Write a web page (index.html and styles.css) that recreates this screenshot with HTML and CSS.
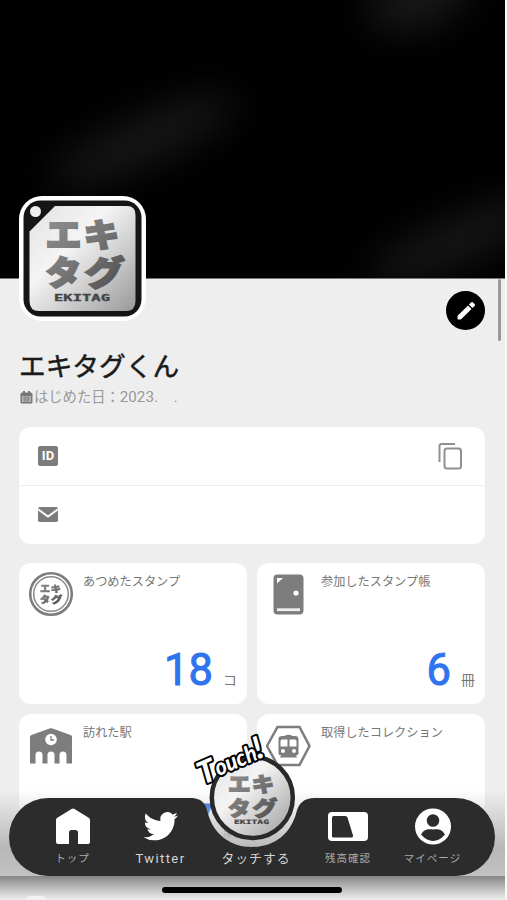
FILE: index.html
```html
<!DOCTYPE html>
<html lang="ja">
<head>
<meta charset="utf-8">
<title>マイページ</title>
<link rel="stylesheet" href="styles.css">
</head>
<body>
<svg class="defs" aria-hidden="true">
  <defs>
    <linearGradient id="plate" x1="0" y1="0" x2="1" y2="1">
      <stop offset="0" stop-color="#e2e2e2"/><stop offset=".38" stop-color="#f4f4f4"/><stop offset=".62" stop-color="#d2d2d2"/><stop offset="1" stop-color="#999"/>
    </linearGradient>
    <linearGradient id="ink" gradientUnits="userSpaceOnUse" x1="0" y1="0" x2="78" y2="72">
      <stop offset="0" stop-color="#8e8e8e"/><stop offset=".5" stop-color="#747474"/><stop offset="1" stop-color="#4c4c4c"/>
    </linearGradient>
    <symbol id="mark" viewBox="0 0 78 72" overflow="visible">
      <g class="mark-kana">
        <text x="-2" y="30" textLength="36" lengthAdjust="spacingAndGlyphs">エ</text>
        <text x="36" y="30" textLength="36" lengthAdjust="spacingAndGlyphs">キ</text>
        <text x="-2" y="68" textLength="36" lengthAdjust="spacingAndGlyphs">タ</text>
        <text x="37" y="68" textLength="40" lengthAdjust="spacingAndGlyphs">グ</text>
      </g>
    </symbol>
  </defs>
</svg>
<div class="screen">
  <div class="cover"><i class="glow g1"></i><i class="glow g2"></i><i class="glow g3"></i></div>
  <main class="content">
    <div class="top">
      <svg class="avatar" width="128" height="126" viewBox="0 0 128 126">
        <rect x="0" y="1" width="127" height="125" rx="23" fill="#fff"/>
        <rect x="4.500" y="5.500" width="118" height="116" rx="17" fill="#151515"/>
        <path d="M36 11H108Q116.500 11 116.500 20V106Q116.500 116 107 116H20Q10.500 116 10.500 106V36.500Z" fill="url(#plate)"/>
        <circle cx="16.500" cy="16.500" r="5.500" fill="#eee"/>
        <use href="#mark" x="28.500" y="22" width="78" height="72"/>
        <text class="ekitag" x="35" y="105.500" textLength="56" lengthAdjust="spacingAndGlyphs">EKITAG</text>
      </svg>
      <button class="edit" aria-label="編集"><svg width="24" height="24" viewBox="0 0 24 24" fill="#fff"><path d="M3.500 17.500q0-.5.400-.9L14 6.500l3.500 3.500L7.400 20.100q-.4.400-.9.400H4.500q-1 0-1-1zM20.600 6.900c.5-.5.500-1.300 0-1.800l-1.700-1.700c-.5-.5-1.300-.5-1.800 0l-2.200 2.200 3.500 3.500z"/></svg></button>
    </div>
    <h1>エキタグくん</h1>
    <p class="since"><svg width="13" height="13" viewBox="0 0 13 13"><path d="M2 1.500h1V0h2v1.500h3V0h2v1.500h1q1.500 0 1.500 1.500v8q0 1.500-1.500 1.500H2Q.5 12.500.5 11V3Q.5 1.500 2 1.500z" fill="#777"/><path d="M2 5h9v6H2z" fill="#b5b5b5"/><path d="M3 7h7M3 9h7M5 5v6M8 5v6" stroke="#777" stroke-width=".7"/></svg><span>はじめた日：</span><span class="date">2023.</span><span>.</span></p>
    <section class="contact">
      <div class="line">
        <span class="id">ID</span>
        <svg width="26" height="30" viewBox="0 0 26 30" fill="none" stroke="#909090" stroke-width="2"><path d="M2.500 21V5q0-2 2-2H18"/><rect x="7.500" y="7.500" width="16.500" height="20" rx="2.500"/></svg>
      </div>
      <div class="line">
        <svg width="20" height="15" viewBox="0 0 20 15"><rect width="20" height="15" rx="1.800" fill="#7c7c7c"/><path d="M0 2.200 10 9.500 20 2.200" fill="none" stroke="#fff" stroke-width="2"/></svg>
      </div>
    </section>
    <section class="stats">
      <article>
        <header><svg width="46" height="46" viewBox="0 0 46 46"><circle cx="23" cy="23" r="20.800" fill="none" stroke="#7d7d7d" stroke-width="2.600"/><circle cx="23" cy="23" r="17.300" fill="none" stroke="#8a8a8a" stroke-width="1.500"/><use class="flat" href="#mark" x="12.500" y="13" width="22" height="20.300"/></svg><h2>あつめたスタンプ</h2></header>
        <p class="count"><b>18</b><span>コ</span></p>
      </article>
      <article>
        <header><svg width="46" height="46" viewBox="0 0 46 46"><rect x="7.500" y="3.500" width="30" height="40" rx="4" fill="#7d7d7d"/><path d="M11 7h6l-6 5.500z" fill="#fff"/><circle cx="30" cy="22" r="2.600" fill="#fff"/><path d="M11 38.700h23" stroke="#eee" stroke-width="2.800"/></svg><h2>参加したスタンプ帳</h2></header>
        <p class="count"><b>6</b><span>冊</span></p>
      </article>
      <article>
        <header><svg width="46" height="46" viewBox="0 0 46 46"><path d="M2 41.500V15q0-1.500 1.500-2L21.500 6.500q1.500-.6 3 0L42.500 13q1.500.5 1.500 2v26.500h-5.500V33a3.500 3.500 0 0 0-7 0v8.500h-5V33a3.500 3.500 0 0 0-7 0v8.500h-5V33a3.500 3.500 0 0 0-7 0v8.500z" fill="#7d7d7d"/><circle cx="23" cy="17.500" r="5.800" fill="#fff"/><path d="M23 14v4h3" fill="none" stroke="#7d7d7d" stroke-width="1.300"/></svg><h2>訪れた駅</h2></header>
        <p class="count"><b>7</b><span>駅</span></p>
      </article>
      <article>
        <header><svg width="46" height="46" viewBox="0 0 46 46"><path d="M11.500 5h22L43.500 24 33.500 43h-22L1 24z" fill="#fff" stroke="#7d7d7d" stroke-width="2.500"/><g transform="translate(0 1)"><path d="M18.500 13q4-2.500 8 0h2.500q3.500 0 3.500 3v14q0 2.500-3 2.500l2 2H13.500l2-2q-3 0-3-2.500V16q0-3 3.500-3z" fill="#7d7d7d"/><path d="M16 16.500h5.500v7H14.500V18q0-1.500 1.500-1.500zM23.500 16.500H29q1.500 0 1.500 1.500v5.500h-7z" fill="#fff"/><circle cx="17" cy="28" r="2" fill="#fff"/><circle cx="28" cy="28" r="2" fill="#fff"/></g></svg><h2>取得したコレクション</h2></header>
      </article>
    </section>
  </main>
  <div class="shade"></div>
  <div class="bottom"><i class="peek"></i></div>
  <nav>
    <svg class="bar" width="486" height="78" viewBox="0 0 486 78"><path d="M39 0H181C194 0 197 7 198.500 14C204 36 221 49 243 49S282 36 287.500 14C290 5 295 0 306 0H447A39 39 0 0 1 447 78H39A39 39 0 0 1 39 0Z" fill="#2c2c2c"/></svg>
    <div class="tabs">
      <a><svg width="40" height="40" viewBox="0 0 40 40"><path d="M3 14q0-1.500 1.300-2.300L18.500 3q1.500-.9 3 0l14.200 8.700Q37 12.500 37 14v22q0 2-2 2H25V26.500q0-2.500-2.500-2.500h-4Q16 24 16 26.500V38H5q-2 0-2-2z" fill="#fff"/></svg><span>トップ</span></a>
      <a class="en"><svg width="40" height="40" viewBox="0 0 40 40"><path transform="translate(2.500 3)scale(1.440)" d="M23.953 4.570a10 10 0 0 1-2.825.775 4.958 4.958 0 0 0 2.163-2.723c-.951.555-2.005.959-3.127 1.184a4.920 4.920 0 0 0-8.384 4.482C7.690 8.095 4.067 6.130 1.640 3.162a4.822 4.822 0 0 0-.666 2.475c0 1.710.87 3.213 2.188 4.096a4.904 4.904 0 0 1-2.228-.616v.06a4.923 4.923 0 0 0 3.946 4.827 4.996 4.996 0 0 1-2.212.085 4.936 4.936 0 0 0 4.604 3.417 9.867 9.867 0 0 1-6.102 2.105c-.39 0-.779-.023-1.170-.067a13.995 13.995 0 0 0 7.557 2.209c9.053 0 13.998-7.496 13.998-13.985 0-.21 0-.42-.015-.63A9.935 9.935 0 0 0 24 4.590z" fill="#fff"/></svg><span>Twitter</span></a>
      <a class="touch"><i></i><span>タッチする</span></a>
      <a class="kanji"><svg width="42" height="40" viewBox="0 0 42 40"><rect x="1" y="6" width="40" height="29" rx="4" fill="#fff"/><path d="M6.500 10h12q1.500 0 2 1.500L26 29.500q.5 2-1.500 2h-18q-1.500 0-1.500-1.500V11.500Q5 10 6.500 10z" fill="#2c2c2c"/></svg><span>残高確認</span></a>
      <a><svg width="40" height="40" viewBox="0 0 40 40"><circle cx="20" cy="20.500" r="18" fill="#fff"/><circle cx="20" cy="14.500" r="6.300" fill="#2c2c2c"/><path d="M8 28.500C12 22 16 23.500 20 23.500S28 22 32 28.500C28 33 24 35 20 35S12 33 8 28.500z" fill="#2c2c2c"/></svg><span>マイページ</span></a>
    </div>
    <svg class="badge" width="100" height="118" viewBox="0 0 100 118">
      <circle cx="55.300" cy="69.500" r="40.500" fill="url(#plate)" stroke="#292929" stroke-width="4.500"/>
      <use href="#mark" x="32" y="45" width="49" height="45"/>
      <text class="ekitag small" x="37" y="96" textLength="35" lengthAdjust="spacingAndGlyphs">EKITAG</text>
      <g class="shout" transform="rotate(-23 8 55)"><text x="5" y="56" class="cap">T</text><text x="23" y="54" textLength="44" lengthAdjust="spacingAndGlyphs">ouch</text><text x="66" y="54" class="cap">!</text></g>
    </svg>
  </nav>
  <i class="home"></i>
  <i class="scroll"></i>
</div>
</body>
</html>
```
FILE: styles.css
```css
* { box-sizing: border-box; margin: 0; padding: 0; }
body { width: 507px; height: 900px; overflow: hidden; background: #fafafa; font-family: Roboto, "Noto Sans CJK JP", sans-serif; }
svg { display: block; flex: none; }
.defs { position: absolute; width: 0; height: 0; }
.screen { position: relative; width: 505px; height: 900px; overflow: hidden; background: #eee; }
.cover { position: relative; height: 279px; background: #000; overflow: hidden; border-bottom: 1px solid #777; }
.glow { position: absolute; border-radius: 50%; filter: blur(20px); transform: rotate(-24deg); background: #1a1a1a; }
.g1 { left: 40px; top: 120px; width: 205px; height: 42px; }
.g2 { left: 365px; top: -35px; width: 110px; height: 60px; }
.g3 { left: 360px; top: 222px; width: 190px; height: 40px; }
.content { padding: 0 20px 0 19px; }
.top { display: flex; justify-content: space-between; height: 67px; }
.avatar { margin-top: -84px; position: relative; }
.mark-kana { font: 900 33px "Noto Sans CJK JP", sans-serif; fill: url(#ink); stroke: url(#ink); stroke-width: 1.8; }
.flat { filter: brightness(.95); }
.ekitag { font: 700 8.500px "DejaVu Sans Mono", monospace; fill: #444; stroke: #444; stroke-width: .3; }
.small { font-size: 6px; stroke-width: .2; }
.edit { width: 39px; height: 39px; margin-top: 12px; border: 0; border-radius: 50%; background: #000; display: grid; place-items: center; }
h1 { font: 400 26.700px/38px "Noto Sans CJK JP", sans-serif; height: 38px; color: #1a1a1a; -webkit-text-stroke: .5px #1a1a1a; }
.since { display: flex; align-items: center; height: 24px; margin: 1px 0 0 1px; font: 14.300px/24px Roboto, "Noto Sans CJK JP", sans-serif; color: #999; }
.since svg { margin-right: 1px; }
.date { width: 54px; font-size: 15.200px; }
.contact { margin-top: 18px; height: 117px; border-radius: 12px; background: #fff; }
.line { height: 58px; padding: 0 22px 0 19px; display: flex; align-items: center; justify-content: space-between; }
.line + .line { border-top: 1px solid #eee; }
.id { width: 20px; height: 20px; border-radius: 2px; background: #7c7c7c; color: #fff; font: 700 13px/20px Roboto, sans-serif; text-align: center; }
.stats { display: grid; grid-template-columns: 228px 228px; grid-auto-rows: 141px; gap: 10px; margin-top: 19px; }
article { background: #fff; border-radius: 12px; padding: 8px 10px 0 9px; display: flex; flex-direction: column; }
header { display: flex; gap: 9px; height: 46px; }
h2 { font: 400 12.200px/20px "Noto Sans CJK JP", sans-serif; color: #777; white-space: nowrap; }
.count { margin-top: 29px; height: 50px; display: flex; justify-content: flex-end; align-items: baseline; line-height: 50px; color: #777; }
.count b { font-size: 43.500px; font-weight: 400; color: #2e74ee; -webkit-text-stroke: 1px #2e74ee; margin-right: 10px; }
.count span { font-size: 14px; }
.shade { position: absolute; left: 0; right: 0; top: 790px; height: 86px; background: linear-gradient(#bbb0, #b8b8b8 68%, #c2c2c2); }
.bottom { position: absolute; left: 0; right: 0; top: 876px; height: 24px; padding: 20px 0 0 26px; background: linear-gradient(#858585, #bcbcbc 50%, #eee); }
.peek { display: block; width: 20px; height: 10px; border-radius: 4px; background: #f3f3f3; }
nav { position: absolute; left: 9px; top: 798px; width: 486px; height: 78px; }
.bar { position: absolute; }
.tabs { position: relative; display: grid; grid-template-columns: 89px 87px 101px 86px 83px; padding-left: 19px; }
.tabs a { display: flex; flex-direction: column; align-items: center; padding-top: 8px; color: #d5d5d5; font: 12px/24px "Noto Sans CJK JP", sans-serif; letter-spacing: 1px; white-space: nowrap; }
.tabs a:first-child, .tabs a:last-child, .tabs .kanji { font-size: 10.500px; color: #aaa; }
.tabs .en { font-family: Roboto, sans-serif; font-size: 13px; line-height: 26px; letter-spacing: 1.400px; }
.touch i { height: 40px; }
.tabs .touch { font-size: 12.800px; }
.tabs .touch span { padding-left: 3px; }
.badge { position: absolute; left: 188px; top: -70px; overflow: visible; }
.shout { font: italic 900 23px Lato, sans-serif; fill: #fff; stroke: #000; stroke-width: 4px; stroke-linejoin: round; paint-order: stroke; }
.cap { font-size: 31px; }
.home { position: absolute; left: 162px; top: 887px; width: 180px; height: 6px; border-radius: 3px; background: #000; }
.scroll { position: absolute; right: 4px; top: 279px; width: 3px; height: 62px; border-radius: 2px; background: #999; }
```
